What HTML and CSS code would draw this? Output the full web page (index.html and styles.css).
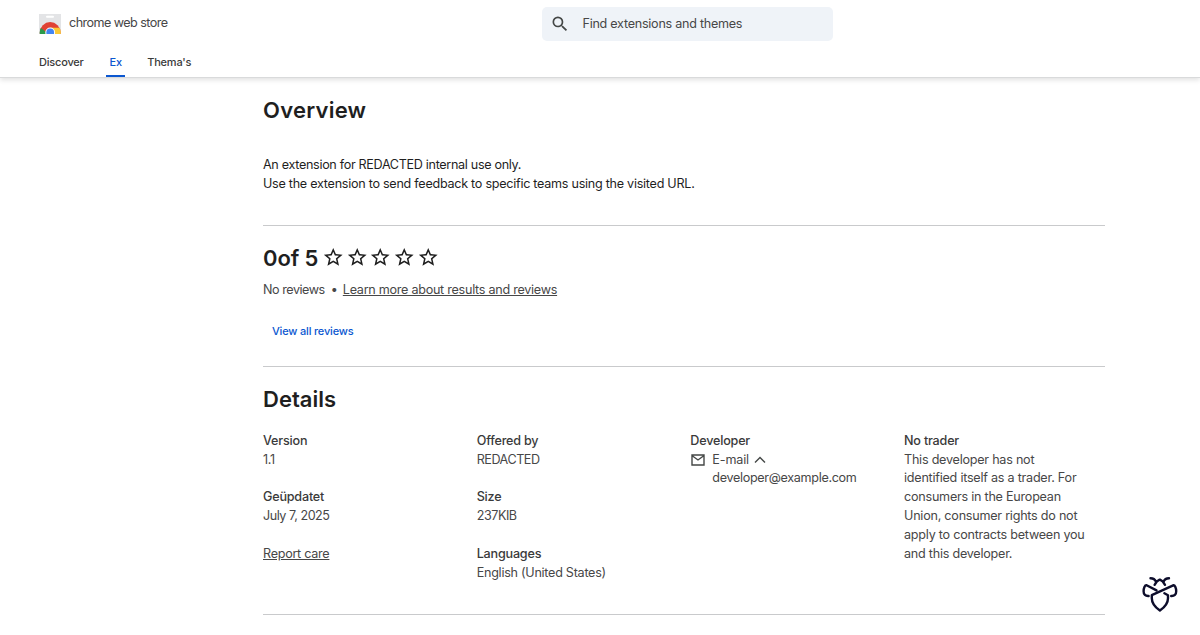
FILE: index.html
```html
<!DOCTYPE html>
<html lang="en">
<head>
<meta charset="UTF-8">
<title>Chrome Web Store</title>
<link rel="stylesheet" href="styles.css">
</head>
<body>
<svg class="defs" width="0" height="0">
  <symbol id="star" viewBox="0 0 24 24">
    <path d="M22 9.24l-7.19-.62L12 2 9.19 8.63 2 9.24l5.46 4.73L5.82 21 12 17.27 18.18 21l-1.63-7.03L22 9.24zM12 15.4l-3.76 2.27 1-4.28-3.32-2.88 4.38-.38L12 6.1l1.71 4.04 4.38.38-3.32 2.88 1 4.28L12 15.4z"/>
  </symbol>
</svg>
<header class="header">
  <div class="top-bar">
    <a class="brand">
      <svg class="logo" viewBox="0 0 22 20">
        <defs>
          <clipPath id="bag"><rect width="22" height="20"/></clipPath>
        </defs>
        <rect width="22" height="20" fill="#e3e4e6"/>
        <rect x="7" y="1.8" width="8" height="1.9" rx=".95" fill="#fff"/>
        <g clip-path="url(#bag)">
          <circle cx="11.2" cy="18.5" r="10.4" fill="#e04234"/>
          <path d="M1.9 13.9A10.4 10.4 0 0 0 1.3 22H9L6.5 17.5z" fill="#2b9a4b"/>
          <path d="M11.2 13.7h9.3A10.4 10.4 0 0 1 21.2 22h-8z" fill="#fbc934"/>
          <circle cx="11.2" cy="18.5" r="4.9" fill="#fff"/>
          <circle cx="11.2" cy="18.5" r="3.9" fill="#4285f4"/>
        </g>
      </svg>
      <span class="brand-name">chrome web store</span>
    </a>
    <div class="search">
      <svg class="search-icon" viewBox="0 0 24 24"><path d="M15.5 14h-.79l-.28-.27A6.47 6.47 0 0 0 16 9.5 6.5 6.5 0 1 0 9.5 16c1.61 0 3.09-.59 4.23-1.57l.27.28v.79l5 4.99L20.49 19l-4.99-5zm-6 0C7.01 14 5 11.99 5 9.5S7.01 5 9.5 5 14 7.01 14 9.5 11.99 14 9.5 14z"/></svg>
      <span class="search-text">Find extensions and themes</span>
    </div>
  </div>
  <nav class="tabs">
    <a class="tab">Discover</a>
    <a class="tab active">Ex</a>
    <a class="tab">Thema's</a>
  </nav>
</header>
<main class="content">
  <section class="overview">
    <h2>Overview</h2>
    <p class="intro">An extension for REDACTED internal use only.</p>
    <p>Use the extension to send feedback to specific teams using the visited URL.</p>
  </section>
  <section class="reviews">
    <div class="rating">
      <h2>0of 5</h2>
      <div class="stars">
        <svg><use href="#star"/></svg>
        <svg><use href="#star"/></svg>
        <svg><use href="#star"/></svg>
        <svg><use href="#star"/></svg>
        <svg><use href="#star"/></svg>
      </div>
    </div>
    <div class="review-info">
      <span class="tight">No reviews</span>
      <span class="dot">•</span>
      <a class="link">Learn more about results and reviews</a>
    </div>
    <a class="view-all">View all reviews</a>
  </section>
  <section class="details">
    <h2>Details</h2>
    <div class="grid">
      <div class="col">
        <div class="item"><h3>Version</h3><p>1.1</p></div>
        <div class="item"><h3>Geüpdatet</h3><p class="tight">July 7, 2025</p></div>
        <div class="item"><a class="link">Report care</a></div>
      </div>
      <div class="col">
        <div class="item"><h3>Offered by</h3><p class="tight">REDACTED</p></div>
        <div class="item"><h3>Size</h3><p class="tight">237KIB</p></div>
        <div class="item"><h3>Languages</h3><p>English (United States)</p></div>
      </div>
      <div class="col">
        <h3>Developer</h3>
        <div class="email">
          <svg class="mail-icon" viewBox="0 0 14 12"><path d="M1 1h12v10H1zM1.2 1.8L7 6l5.8-4.2"/></svg>
          <span>E-mail</span>
          <svg class="chevron" viewBox="0 0 12 8"><path d="M1 6.5l5-5 5 5"/></svg>
        </div>
        <p class="address">developer@example.com</p>
      </div>
      <div class="col trader">
        <h3>No trader</h3>
        <p>This developer has not<br>identified itself as a trader. For<br>consumers in the European<br>Union, consumer rights do not<br>apply to contracts between you<br>and this developer.</p>
      </div>
    </div>
  </section>
</main>
<svg class="bee" viewBox="0 0 36 36">
  <path d="M8.5 2.2c3 0 4.500 1 5.500 3.600M27 2.200c-3 0-4.500 1-5.500 3.600M12.600 8.800l2.200-3.300L17.800 3.600l3 1.900L23 8.800"/>
  <path d="M14.500 14.400L4.600 9.300C2.800 9 1.600 12.200 1.600 15.200c0 3.400 1.800 5 5 4.800"/>
  <path d="M29.200 20c3.200.2 5-1.400 5-4.800 0-3-1.200-6.200-3-5.900L9.800 19.200v3c0 5 3 8.800 8.100 12.300 5.100-3.500 8.100-7.300 8.100-12.300v-3l-3.600-1.900"/>
</svg>
</body>
</html>
```
FILE: styles.css
```css
:root {
  --text: #1f1f1f;
  --muted: #474747;
  --blue: #0b57d0;
  --line: #c9cacc;
}
* {
  box-sizing: border-box;
}
body {
  margin: 0;
  height: 635px;
  overflow: hidden;
  background: #fff;
  color: var(--text);
  font-family: Inter, "Open Sans", sans-serif;
  font-size: 12.6px;
  line-height: 18.9px;
  letter-spacing: -.27px;
}
h2, h3, p {
  margin: 0;
}
h2 {
  font-size: 22px;
  line-height: 28px;
  font-weight: 600;
  letter-spacing: 0;
}
h3 {
  font-size: 12.6px;
  font-weight: 500;
  letter-spacing: -.2px;
  color: #3a3a3a;
}
.defs {
  display: none;
}
.tight {
  letter-spacing: -.46px;
}

/* header */
.header {
  height: 78px;
  border-bottom: 1px solid #d9dadb;
  box-shadow: 0 2px 5px rgba(0, 0, 0, .12);
}
.top-bar {
  display: flex;
  height: 47px;
  padding: 7px 0 0 39px;
}
.brand {
  display: flex;
  gap: 8px;
  width: 502.5px;
  padding-top: 7px;
  color: var(--muted);
}
.brand-name {
  letter-spacing: -.56px;
}
.logo {
  width: 22px;
  height: 20px;
}
.search {
  display: flex;
  align-items: center;
  gap: 12.5px;
  width: 291px;
  height: 34px;
  padding-left: 8.5px;
  border-radius: 5px;
  background: #eff3f8;
  color: var(--muted);
}
.search-icon {
  width: 20px;
  height: 20px;
  fill: #444746;
}
.tabs {
  display: flex;
  gap: 22px;
  height: 30px;
  padding-left: 39px;
  font-size: 11px;
  font-weight: 500;
  line-height: 30px;
  letter-spacing: -.2px;
  color: #3a3a3a;
}
.tab.active {
  width: 19px;
  margin-left: .5px;
  text-align: center;
  color: var(--blue);
  border-bottom: 2px solid var(--blue);
}

/* page */
.content {
  width: 842px;
  margin-left: 263px;
}
.overview {
  height: 148px;
  padding-top: 18px;
  border-bottom: 1px solid var(--line);
}
.overview h2 {
  margin-bottom: 32px;
  letter-spacing: .25px;
}
.intro {
  letter-spacing: -.32px;
}
.reviews {
  height: 141px;
  padding-top: 18px;
  border-bottom: 1px solid var(--line);
}
.rating {
  display: flex;
  gap: 3.5px;
}
.rating h2 {
  letter-spacing: -.1px;
}
.stars {
  display: flex;
  gap: 1.2px;
  padding-top: 2px;
}
.stars svg {
  width: 22.5px;
  height: 22.5px;
  fill: var(--text);
}
.review-info {
  display: flex;
  gap: 7px;
  margin-top: 9px;
  color: var(--muted);
}
.dot {
  width: 4px;
  margin: 0 1px 0 -1px;
}
.link {
  color: var(--muted);
  text-decoration: underline;
}
.view-all {
  display: inline-block;
  margin: 22px 0 0 9px;
  font-size: 11px;
  font-weight: 500;
  letter-spacing: -.18px;
  color: var(--blue);
}
.details {
  height: 248px;
  padding-top: 18px;
  border-bottom: 1px solid var(--line);
}
.grid {
  display: grid;
  grid-template-columns: repeat(4, 1fr);
  column-gap: 12.7px;
  margin-top: 18.6px;
  color: var(--muted);
}
.item {
  margin-bottom: 18.9px;
}
.email {
  display: flex;
  align-items: center;
  letter-spacing: -.15px;
}
.mail-icon {
  width: 14px;
  height: 12px;
  margin: 0 7px 0 1px;
  fill: none;
  stroke: #444746;
  stroke-width: 1.4;
}
.chevron {
  width: 12px;
  height: 8px;
  margin-left: 5px;
  fill: none;
  stroke: #444746;
  stroke-width: 1.4;
}
.address {
  padding-left: 22px;
  letter-spacing: -.33px;
}
.trader p {
  white-space: nowrap;
  letter-spacing: -.24px;
}

/* floating badge */
.bee {
  position: fixed;
  left: 1142px;
  top: 576px;
  width: 36px;
  height: 36px;
  fill: none;
  stroke: #0d0d2b;
  stroke-width: 2.4;
  stroke-linecap: round;
  stroke-linejoin: round;
}
```
